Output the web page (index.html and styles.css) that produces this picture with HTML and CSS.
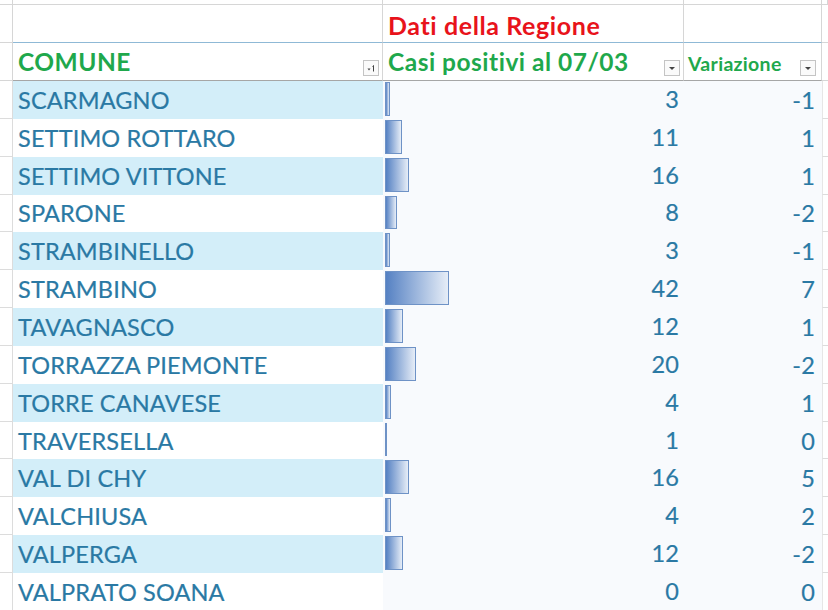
FILE: index.html
```html
<!DOCTYPE html>
<html lang="it">
<head>
<meta charset="utf-8">
<title>Dati della Regione</title>
<link rel="stylesheet" href="styles.css">
</head>
<body>
<div class="sheet">
  <div class="row row-top">
    <div class="m"></div><div class="c a"></div><div class="c b"></div><div class="c cc"></div><div class="m r"></div>
  </div>
  <div class="row row-title">
    <div class="m"></div>
    <div class="c a"></div>
    <div class="c b"><span class="title">Dati della Regione</span></div>
    <div class="c cc"></div>
    <div class="m r"></div>
  </div>
  <div class="row row-head">
    <div class="m"></div>
    <div class="c a"><span class="h">COMUNE</span><span class="filt sort"><svg viewBox="0 0 14 14" width="14" height="14"><path d="M3.5 7.5h3l-1.5 2z" fill="#444"/><path d="M9.5 4.5v6" stroke="#444" stroke-width="1"/><path d="M8.5 5.5l1-1" stroke="#444" stroke-width="1"/></svg></span></div>
    <div class="c b"><span class="h">Casi positivi al 07/03</span><span class="filt"><svg viewBox="0 0 14 14" width="14" height="14"><path d="M4 6h6l-3 3z" fill="#444"/></svg></span></div>
    <div class="c cc"><span class="h small">Variazione</span><span class="filt"><svg viewBox="0 0 14 14" width="14" height="14"><path d="M4 6h6l-3 3z" fill="#444"/></svg></span></div>
    <div class="m r"></div>
  </div>

  <div class="row data odd"><div class="m"></div><div class="c a">SCARMAGNO</div><div class="c b"><span class="bar" style="width:4.6px"></span><span class="n">3</span></div><div class="c cc"><span class="n">-1</span></div><div class="m r"></div></div>
  <div class="row data"><div class="m"></div><div class="c a">SETTIMO ROTTARO</div><div class="c b"><span class="bar" style="width:16.7px"></span><span class="n">11</span></div><div class="c cc"><span class="n">1</span></div><div class="m r"></div></div>
  <div class="row data odd"><div class="m"></div><div class="c a">SETTIMO VITTONE</div><div class="c b"><span class="bar" style="width:24.3px"></span><span class="n">16</span></div><div class="c cc"><span class="n">1</span></div><div class="m r"></div></div>
  <div class="row data"><div class="m"></div><div class="c a">SPARONE</div><div class="c b"><span class="bar" style="width:12.2px"></span><span class="n">8</span></div><div class="c cc"><span class="n">-2</span></div><div class="m r"></div></div>
  <div class="row data odd"><div class="m"></div><div class="c a">STRAMBINELLO</div><div class="c b"><span class="bar" style="width:4.6px"></span><span class="n">3</span></div><div class="c cc"><span class="n">-1</span></div><div class="m r"></div></div>
  <div class="row data"><div class="m"></div><div class="c a">STRAMBINO</div><div class="c b"><span class="bar" style="width:64px"></span><span class="n">42</span></div><div class="c cc"><span class="n">7</span></div><div class="m r"></div></div>
  <div class="row data odd"><div class="m"></div><div class="c a">TAVAGNASCO</div><div class="c b"><span class="bar" style="width:18.3px"></span><span class="n">12</span></div><div class="c cc"><span class="n">1</span></div><div class="m r"></div></div>
  <div class="row data"><div class="m"></div><div class="c a">TORRAZZA PIEMONTE</div><div class="c b"><span class="bar" style="width:30.5px"></span><span class="n">20</span></div><div class="c cc"><span class="n">-2</span></div><div class="m r"></div></div>
  <div class="row data odd"><div class="m"></div><div class="c a">TORRE CANAVESE</div><div class="c b"><span class="bar" style="width:6.1px"></span><span class="n">4</span></div><div class="c cc"><span class="n">1</span></div><div class="m r"></div></div>
  <div class="row data"><div class="m"></div><div class="c a">TRAVERSELLA</div><div class="c b"><span class="bar" style="width:1.5px"></span><span class="n">1</span></div><div class="c cc"><span class="n">0</span></div><div class="m r"></div></div>
  <div class="row data odd"><div class="m"></div><div class="c a">VAL DI CHY</div><div class="c b"><span class="bar" style="width:24.3px"></span><span class="n">16</span></div><div class="c cc"><span class="n">5</span></div><div class="m r"></div></div>
  <div class="row data"><div class="m"></div><div class="c a">VALCHIUSA</div><div class="c b"><span class="bar" style="width:6.1px"></span><span class="n">4</span></div><div class="c cc"><span class="n">2</span></div><div class="m r"></div></div>
  <div class="row data odd"><div class="m"></div><div class="c a">VALPERGA</div><div class="c b"><span class="bar" style="width:18.3px"></span><span class="n">12</span></div><div class="c cc"><span class="n">-2</span></div><div class="m r"></div></div>
  <div class="row data"><div class="m"></div><div class="c a">VALPRATO SOANA</div><div class="c b"><span class="bar none"></span><span class="n">0</span></div><div class="c cc"><span class="n">0</span></div><div class="m r"></div></div>
</div>
</body>
</html>
```

FILE: styles.css
```css
* { box-sizing: border-box; }
html, body { margin: 0; padding: 0; background: #fff; }
body { font-family: Lato, "Open Sans", sans-serif; overflow: hidden; }

.sheet { width: 828px; }

.row {
  display: grid;
  grid-template-columns: 13px 370px 301px 138px 6px;
}

.row-top { height: 5px; }
.row-top .m, .row-top .c { border-bottom: 1px solid #d6d6d6; border-right: 1px solid #d6d6d6; }

.row-title { height: 38px; }
.row-title .m { border-bottom: 1px solid #d6d6d6; border-right: 1px solid #d6d6d6; }
.row-title .c { border-right: 1px solid #d6d6d6; border-bottom: 1px solid #8fb9d6; display: flex; align-items: center; }
.row-title .m.r { border-right: none; }

.title {
  color: #e8131b;
  font-weight: 700;
  font-size: 25px;
  letter-spacing: 0.6px;
  padding-left: 5px;
  padding-top: 2px;
}

.row-head { height: 38px; }
.row-head .m { border-bottom: 1px solid #d6d6d6; border-right: 1px solid #d6d6d6; }
.row-head .m.r { border-right: none; }
.row-head .c {
  border-bottom: 1px solid #a6a6a6;
  border-right: 1px solid #d6d6d6;
  display: flex;
  align-items: flex-end;
  justify-content: space-between;
  padding: 0 3px 4px 5px;
}
.h {
  color: #1fa84c;
  font-weight: 700;
  font-size: 24.5px;
  letter-spacing: 0.5px;
  line-height: 1;
  padding-bottom: 2px;
}
.h.small { font-size: 19.5px; letter-spacing: 0.3px; padding-bottom: 3px; }
.row-head .cc { padding-left: 4px; padding-right: 5px; }

.filt {
  width: 16px;
  height: 16px;
  border: 1px solid #c4c4c4;
  background: #fafafa;
  display: flex;
  align-items: center;
  justify-content: center;
}

.data { height: 37.85px; }
.data .m { border-bottom: 1px solid #dcdcdc; border-right: 1px solid #dcdcdc; }
.data .m.r { border-right: none; border-left: 1px solid #e6e6e6; }
.data .c {
  color: #2a79a4;
  font-size: 23.5px;
  letter-spacing: 0.15px;
  display: flex;
  align-items: center;
  -webkit-text-stroke: 0.2px #2a79a4;
}
.data .a { padding-left: 5px; background: #fff; }
.data.odd .a { background: #d3eef9; }
.data .b, .data .cc { background: #f8fafd; }
.data .b { padding: 1px 5px 3px 2px; align-items: stretch; }
.data .cc { justify-content: flex-end; padding-right: 7px; }

.bar {
  display: block;
  flex: none;
  background: linear-gradient(to right, #5581c3, #e6edf7);
  border: 1px solid #6e92c6;
}
.bar.none { width: 0; border: none; }

.data .b .n {
  margin-left: auto;
  align-self: center;
}
```
